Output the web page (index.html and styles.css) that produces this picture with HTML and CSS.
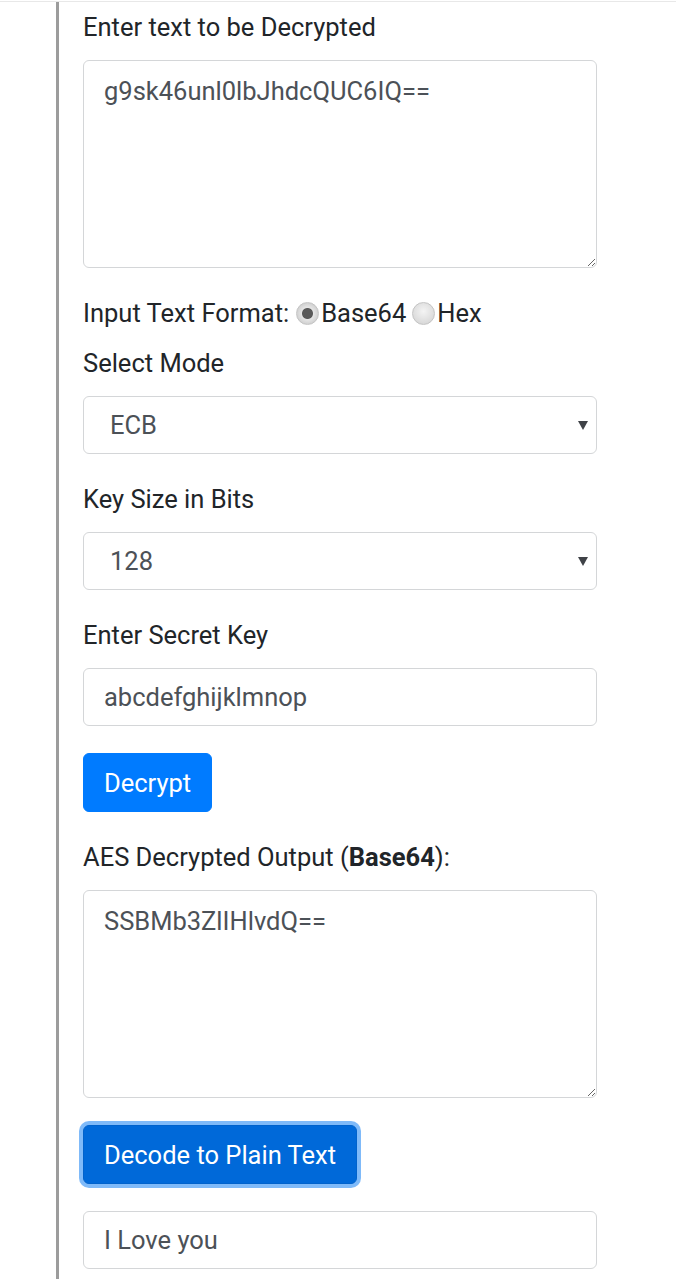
FILE: index.html
```html
<!doctype html>
<html>
<head>
<meta charset="UTF-8">
<title>AES Decryption</title>
<link rel="stylesheet" href="styles.css">
</head>
<body>
	<div class="page">
		<div class="panel">
			<div class="group">
				<label class="label" for="cipher">Enter text to be Decrypted</label>
				<textarea class="field area" id="cipher">g9sk46unl0lbJhdcQUC6IQ==</textarea>
			</div>
			<div class="group format">
				<span>Input Text Format:</span>
				<span class="radio checked"></span><span>Base64</span>
				<span class="radio"></span><span>Hex</span>
			</div>
			<div class="group">
				<label class="label">Select Mode</label>
				<div class="select-wrap">
					<select class="field select"><option>ECB</option></select>
				</div>
			</div>
			<div class="group">
				<label class="label">Key Size in Bits</label>
				<div class="select-wrap">
					<select class="field select"><option>128</option></select>
				</div>
			</div>
			<div class="group">
				<label class="label" for="key">Enter Secret Key</label>
				<input class="field" id="key" type="text" value="abcdefghijklmnop">
			</div>
			<div class="group">
				<button class="btn" type="button">Decrypt</button>
			</div>
			<div class="group">
				<label class="label">AES Decrypted Output (<b>Base64</b>):</label>
				<textarea class="field area">SSBMb3ZlIHlvdQ==</textarea>
			</div>
			<div class="group">
				<button class="btn focus" type="button">Decode to Plain Text</button>
			</div>
			<input class="field" type="text" value="I Love you">
		</div>
	</div>
</body>
</html>
```

FILE: styles.css
```css
*{margin:0;padding:0;box-sizing:border-box;}
body{background:#fff;font-family:Roboto,"Noto Sans",sans-serif;font-size:25.5px;line-height:36px;color:#212529;}
/*page start*/
.page{border-top:1px solid #e8e8e8;margin-top:1px;height:1278px;overflow:hidden;}
.panel{margin-left:56px;border-left:3px solid #9c9c9c;padding:7px 0 0 24px;width:541px;height:100%;}
.group{margin-bottom:27px;}
.label{display:block;margin-bottom:15px;}
.label b{font-weight:700;}
/*fields*/
.field{display:block;width:514px;height:58px;padding:8px 20px;border:1.5px solid #d4d6d8;border-radius:6px;background:#fff;font-family:inherit;font-size:25.5px;line-height:38px;color:#4c5157;outline:none;}
.area{height:208px;padding-top:11px;}
.select-wrap{position:relative;width:514px;}
.select{-webkit-appearance:none;appearance:none;padding-left:26px;}
.select-wrap:after{content:"";position:absolute;right:9px;top:25px;border-left:5px solid transparent;border-right:5px solid transparent;border-top:9px solid #3f4247;}
/*radio*/
.format{display:flex;align-items:center;margin-bottom:14px;}
.format span:first-child{margin-right:7px;}
.radio{width:23px;height:23px;border-radius:50%;background:radial-gradient(circle at 50% 40%,#f4f4f4,#d0d0d0);border:1px solid #c4c4c4;margin-right:2px;}
.radio + span{margin-right:6px;}
.radio.checked{background:radial-gradient(circle,#5a5a5a 0 5px,#e6e6e6 6px,#cfcfcf 11px);}
/*buttons*/
.btn{display:inline-block;height:59px;padding:0 20px;border:1.5px solid #007bff;border-radius:6px;background:#007bff;color:#fff;font-family:inherit;font-size:25.5px;line-height:36px;cursor:pointer;}
.btn.focus{background:#0069d9;border-color:#0062cc;box-shadow:0 0 0 4px #7fbaf9;}
/*page end*/
```
